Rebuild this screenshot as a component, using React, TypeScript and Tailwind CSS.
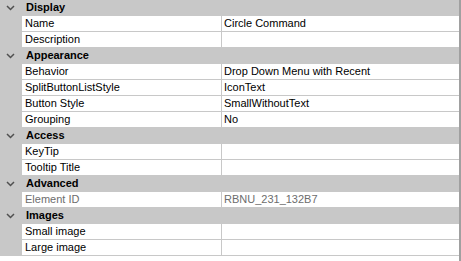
import React from 'react';

type Prop = { name: string; value?: string; readOnly?: boolean };
type Category = { title: string; props: Prop[] };

const categories: Category[] = [
  {
    title: 'Display',
    props: [{ name: 'Name', value: 'Circle Command' }, { name: 'Description' }],
  },
  {
    title: 'Appearance',
    props: [
      { name: 'Behavior', value: 'Drop Down Menu with Recent' },
      { name: 'SplitButtonListStyle', value: 'IconText' },
      { name: 'Button Style', value: 'SmallWithoutText' },
      { name: 'Grouping', value: 'No' },
    ],
  },
  {
    title: 'Access',
    props: [{ name: 'KeyTip' }, { name: 'Tooltip Title' }],
  },
  {
    title: 'Advanced',
    props: [{ name: 'Element ID', value: 'RBNU_231_132B7', readOnly: true }],
  },
  {
    title: 'Images',
    props: [{ name: 'Small image' }, { name: 'Large image' }],
  },
];

const Chevron = () => (
  <svg width="9" height="6" viewBox="0 0 9 6" className="ml-[6px]">
    <path d="M1 1 L4.5 4.5 L8 1" fill="none" stroke="#505050" strokeWidth="1.5" />
  </svg>
);

export default function App() {
  return (
    <div
      className="w-[461px] h-[261px] bg-white border-r-2 border-[#a0a0a0] text-[11px] leading-none text-black"
      style={{ fontFamily: '"Liberation Sans", Arial, sans-serif' }}
    >
      {categories.map((cat) => (
        <div key={cat.title}>
          {/* Category header */}
          <div className="h-[16px] bg-[#c8c8c8] border-b border-[#c8c8c8] flex items-center">
            <div className="w-[22px] flex items-center">
              <Chevron />
            </div>
            <span className="font-bold pl-[4px]">{cat.title}</span>
          </div>
          {cat.props.map((p) => (
            <div key={p.name} className="h-[16px] flex">
              <div className="w-[22px] bg-[#c8c8c8]" />
              <div className="flex-1 flex border-b border-[#c8c8c8]">
                <div
                  className={
                    'w-[200px] border-r border-[#c8c8c8] pl-[3px] flex items-center ' +
                    (p.readOnly ? 'text-[#6d6d6d]' : 'text-black')
                  }
                >
                  {p.name}
                </div>
                <div
                  className={
                    'flex-1 pl-[2px] flex items-center ' +
                    (p.readOnly ? 'text-[#6d6d6d]' : 'text-black')
                  }
                >
                  {p.value}
                </div>
              </div>
            </div>
          ))}
        </div>
      ))}
    </div>
  );
}
